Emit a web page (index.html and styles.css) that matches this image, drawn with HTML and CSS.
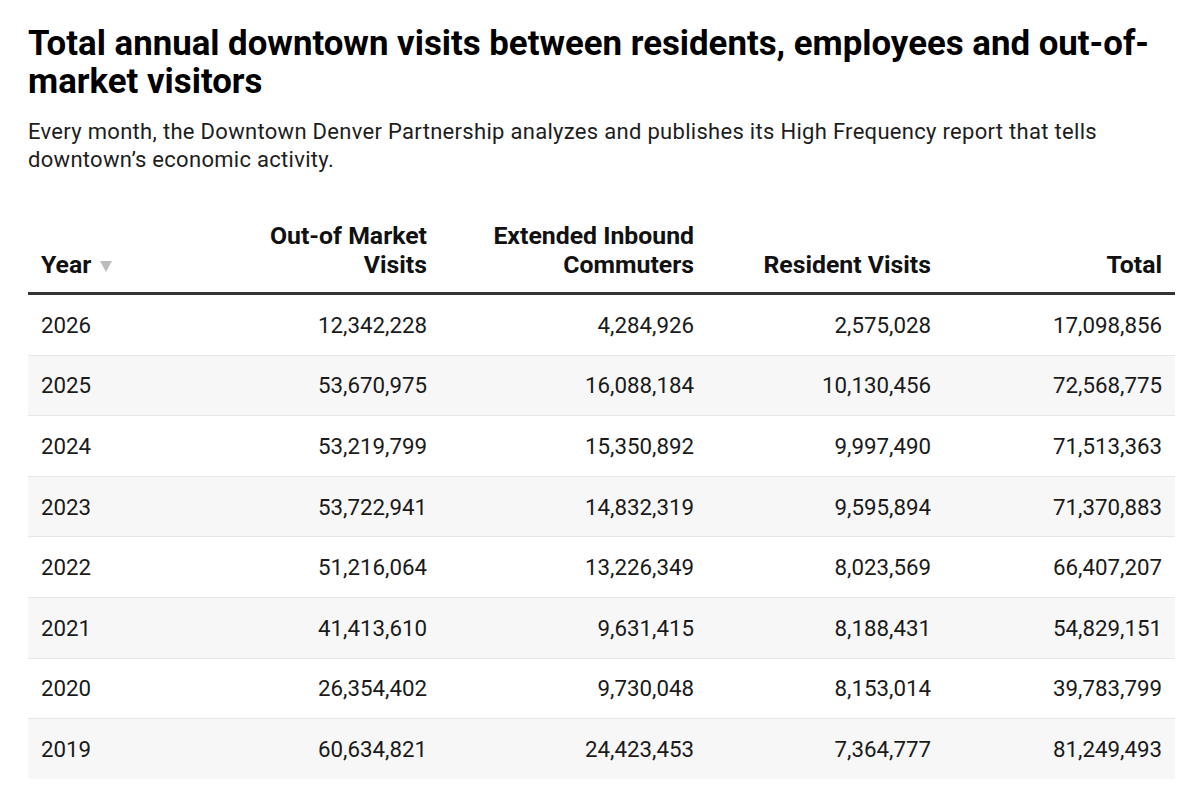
FILE: index.html
```html
<!DOCTYPE html>
<html lang="en">
<head>
<meta charset="utf-8">
<title>Total annual downtown visits</title>
<link rel="stylesheet" href="styles.css">
</head>
<body>
<div class="chart">
  <h1 class="title">Total annual downtown visits between residents, employees and out-of-market visitors</h1>
  <p class="desc">Every month, the Downtown Denver Partnership analyzes and publishes its High Frequency report that tells downtown’s economic activity.</p>
  <table class="data">
    <colgroup>
      <col class="c-year"><col class="c-out"><col class="c-ext"><col class="c-res"><col class="c-tot">
    </colgroup>
    <thead>
      <tr>
        <th class="left">Year<span class="sort"></span></th>
        <th>Out-of Market<br>Visits</th>
        <th>Extended Inbound<br>Commuters</th>
        <th>Resident Visits</th>
        <th>Total</th>
      </tr>
    </thead>
    <tbody>
      <tr><td class="left">2026</td><td>12,342,228</td><td>4,284,926</td><td>2,575,028</td><td>17,098,856</td></tr>
      <tr><td class="left">2025</td><td>53,670,975</td><td>16,088,184</td><td>10,130,456</td><td>72,568,775</td></tr>
      <tr><td class="left">2024</td><td>53,219,799</td><td>15,350,892</td><td>9,997,490</td><td>71,513,363</td></tr>
      <tr><td class="left">2023</td><td>53,722,941</td><td>14,832,319</td><td>9,595,894</td><td>71,370,883</td></tr>
      <tr><td class="left">2022</td><td>51,216,064</td><td>13,226,349</td><td>8,023,569</td><td>66,407,207</td></tr>
      <tr><td class="left">2021</td><td>41,413,610</td><td>9,631,415</td><td>8,188,431</td><td>54,829,151</td></tr>
      <tr><td class="left">2020</td><td>26,354,402</td><td>9,730,048</td><td>8,153,014</td><td>39,783,799</td></tr>
      <tr><td class="left">2019</td><td>60,634,821</td><td>24,423,453</td><td>7,364,777</td><td>81,249,493</td></tr>
    </tbody>
  </table>
</div>
</body>
</html>
```

FILE: styles.css
```css
html, body {
  margin: 0;
  padding: 0;
  background: #ffffff;
}
body {
  font-family: Roboto, "Liberation Sans", Arial, sans-serif;
  color: #181818;
}
.chart {
  padding: 24px 25px 0 28px;
}
.title {
  margin: 0;
  font-size: 34.8px;
  line-height: 38px;
  font-weight: 700;
  color: #000;
}
.desc {
  margin: 18px 0 0 0;
  font-size: 22px;
  line-height: 28px;
  letter-spacing: 0.3px;
  color: #1d1d1d;
}
.data {
  margin-top: 47px;
  width: 1147px;
  border-collapse: collapse;
  table-layout: fixed;
}
.c-year { width: 172px; }
.c-out { width: 240px; }
.c-ext { width: 267px; }
.c-res { width: 237px; }
.c-tot { width: 231px; }
.data th {
  font-size: 24.8px;
  line-height: 29px;
  font-weight: 700;
  color: #111;
  text-align: right;
  vertical-align: bottom;
  padding: 0 13px 13px 13px;
  border-bottom: 3px solid #333;
}
.data td {
  font-size: 22.3px;
  line-height: 24px;
  text-align: right;
  padding: 17.8px 13px;
  height: 24px;
  border-bottom: 1px solid #e6e6e6;
  color: #1a1a1a;
}
.data .left {
  text-align: left;
}
.data tbody tr:nth-child(even) td {
  background: #f7f7f7;
}
.data tbody tr:last-child td {
  border-bottom: none;
}
.sort {
  display: inline-block;
  width: 0;
  height: 0;
  margin-left: 9px;
  border-left: 6px solid transparent;
  border-right: 6px solid transparent;
  border-top: 11px solid #bdbdbd;
  vertical-align: 1px;
}
```
